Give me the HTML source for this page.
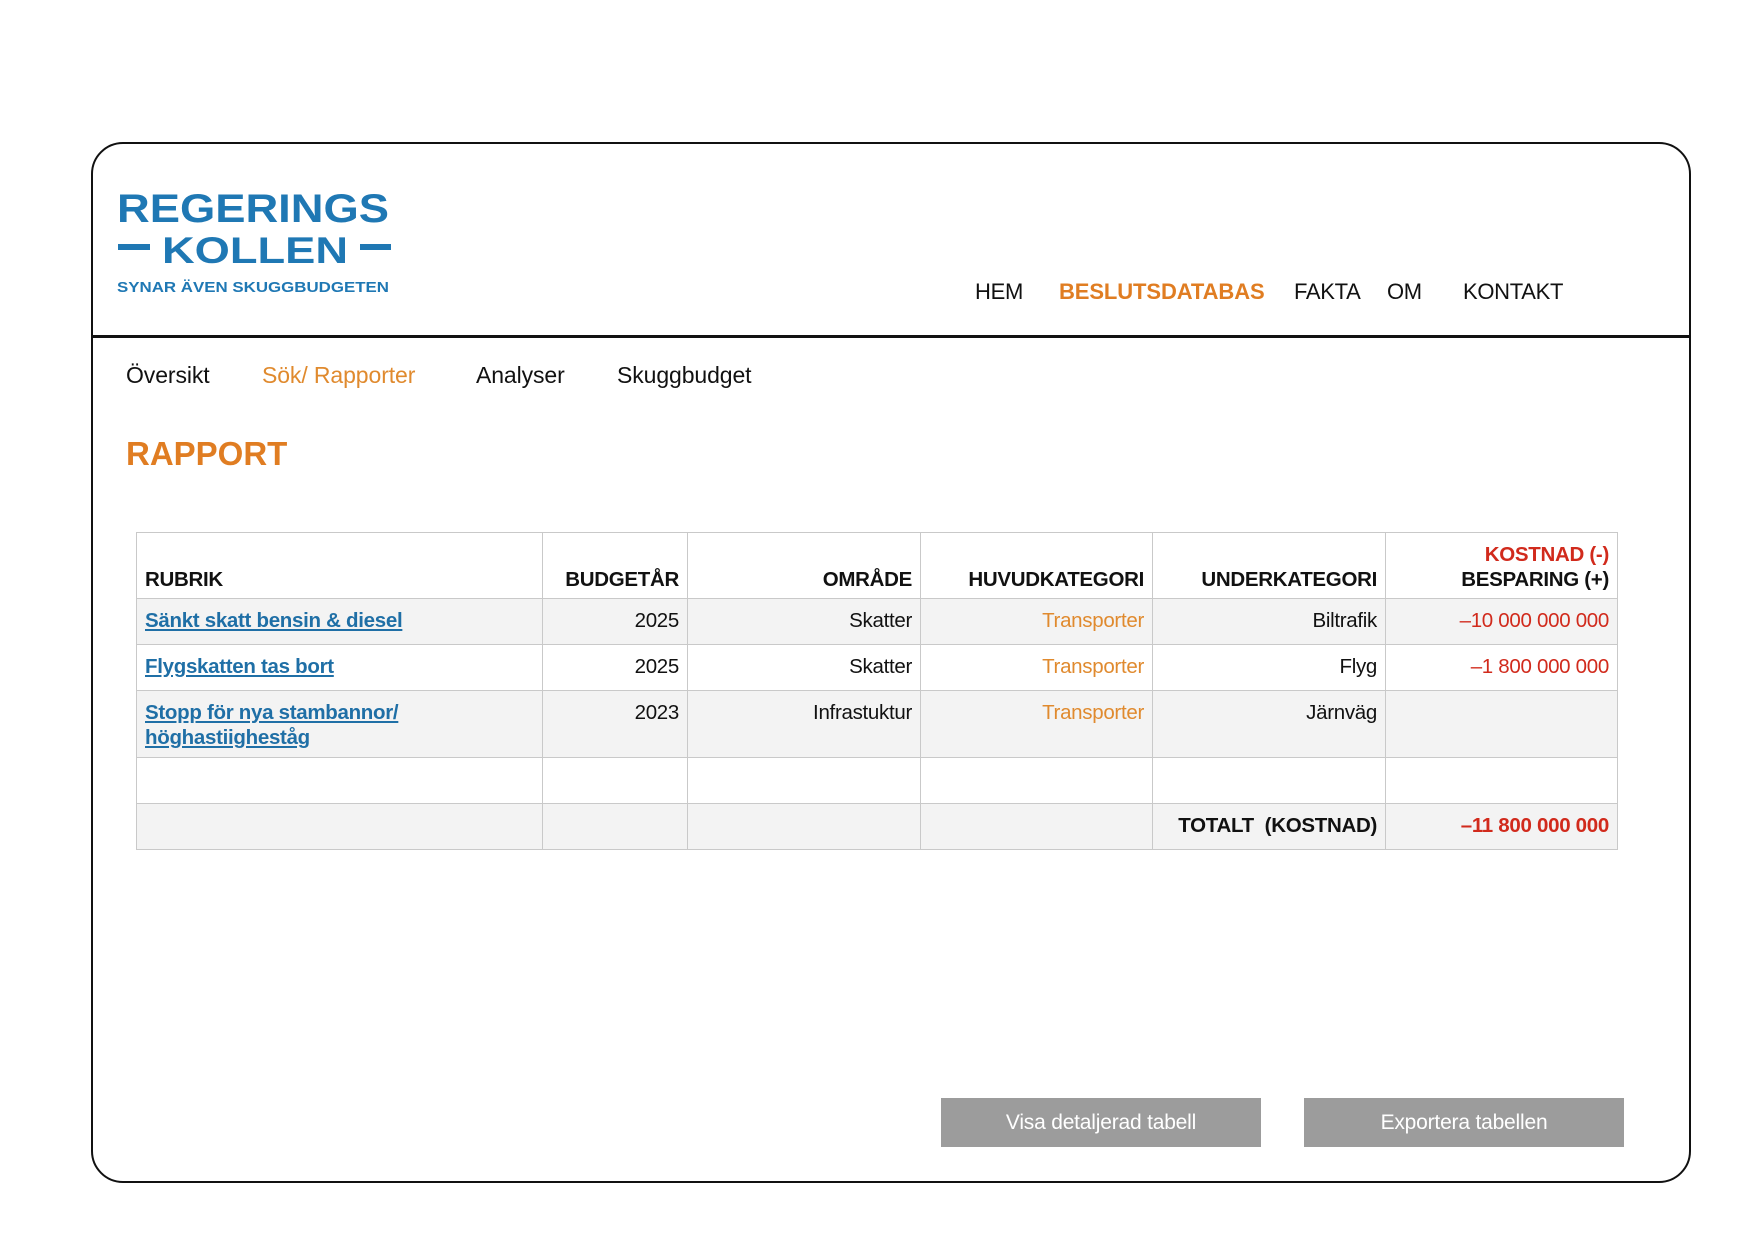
<!DOCTYPE html>
<html><head><meta charset="utf-8"><style>
*{margin:0;padding:0;box-sizing:border-box}
body{width:1754px;height:1241px;background:#fff;position:relative;overflow:hidden;font-family:"Liberation Sans",Arial,sans-serif;color:#111}
.card{position:absolute;left:91px;top:142px;width:1600px;height:1041px;border:2.5px solid #111;border-radius:32px}
.hline{position:absolute;left:91px;top:335px;width:1600px;height:3px;background:#111}
.a{position:absolute;white-space:nowrap}
.nav{font-size:22px;top:279px;letter-spacing:-0.3px}
.sub{font-size:23px;top:362px;letter-spacing:-0.1px}
table{position:absolute;left:136px;top:532px;border-collapse:collapse;table-layout:fixed;font-size:20.5px;letter-spacing:-0.3px}
td{border:1.5px solid #c9c9c9;text-align:right;vertical-align:top;padding:9px 8px 0 8px;line-height:25px}
tr.g td{background:#f3f3f3}
tr.h td{vertical-align:bottom;font-weight:bold;padding-bottom:6px;line-height:25px}
td.l{text-align:left}
a{color:#1f6fa6;font-weight:bold;text-decoration:underline}
.o{color:#e08a2e}
.r{color:#d12a1c}
.btn{position:absolute;top:1098px;height:49px;background:#9c9c9c;color:#fff;font-size:21px;text-align:center;line-height:49px;letter-spacing:-0.2px}
</style></head><body>
<div class="card"></div>
<div class="hline"></div>
<svg class="a" style="left:110px;top:185px" width="300" height="115">
<g fill="#1f78b4" font-family="Liberation Sans, sans-serif" font-weight="bold">
<text x="7" y="37" font-size="40" textLength="272" lengthAdjust="spacingAndGlyphs">REGERINGS</text>
<rect x="8" y="59" width="32" height="6"/>
<text x="52" y="78" font-size="37" textLength="186" lengthAdjust="spacingAndGlyphs">KOLLEN</text>
<rect x="250" y="59" width="31" height="6"/>
<text x="7" y="107" font-size="15" textLength="272" lengthAdjust="spacingAndGlyphs">SYNAR ÄVEN SKUGGBUDGETEN</text>
</g></svg>
<div class="a nav" style="left:975px">HEM</div>
<div class="a nav" style="left:1059px;color:#e07d22;font-weight:bold;letter-spacing:-0.1px">BESLUTSDATABAS</div>
<div class="a nav" style="left:1294px">FAKTA</div>
<div class="a nav" style="left:1387px">OM</div>
<div class="a nav" style="left:1463px">KONTAKT</div>
<div class="a sub" style="left:126px">Översikt</div>
<div class="a sub" style="left:262px;color:#e08a2e">Sök/ Rapporter</div>
<div class="a sub" style="left:476px">Analyser</div>
<div class="a sub" style="left:617px">Skuggbudget</div>
<div class="a" style="left:126px;top:435px;font-size:33px;font-weight:bold;color:#e07d22">RAPPORT</div>
<table>
<colgroup><col style="width:406px"><col style="width:145px"><col style="width:233px"><col style="width:232px"><col style="width:233px"><col style="width:232px"></colgroup>
<tr class="h" style="height:66px"><td class="l">RUBRIK</td><td>BUDGETÅR</td><td>OMRÅDE</td><td>HUVUDKATEGORI</td><td>UNDERKATEGORI</td><td><span class="r">KOSTNAD (-)</span><br>BESPARING (+)</td></tr>
<tr class="g" style="height:46px"><td class="l"><a>Sänkt skatt bensin &amp; diesel</a></td><td>2025</td><td>Skatter</td><td class="o">Transporter</td><td>Biltrafik</td><td class="r">–10 000 000 000</td></tr>
<tr style="height:46px"><td class="l"><a>Flygskatten tas bort</a></td><td>2025</td><td>Skatter</td><td class="o">Transporter</td><td>Flyg</td><td class="r">–1 800 000 000</td></tr>
<tr class="g" style="height:67px"><td class="l"><a>Stopp för nya stambannor/<br>höghastiigheståg</a></td><td>2023</td><td>Infrastuktur</td><td class="o">Transporter</td><td>Järnväg</td><td></td></tr>
<tr style="height:46px"><td></td><td></td><td></td><td></td><td></td><td></td></tr>
<tr class="g" style="height:46px"><td></td><td></td><td></td><td></td><td style="font-weight:bold">TOTALT&nbsp; (KOSTNAD)</td><td class="r" style="font-weight:bold">–11 800 000 000</td></tr>
</table>
<div class="btn" style="left:941px;width:320px">Visa detaljerad tabell</div>
<div class="btn" style="left:1304px;width:320px">Exportera tabellen</div>
</body></html>
